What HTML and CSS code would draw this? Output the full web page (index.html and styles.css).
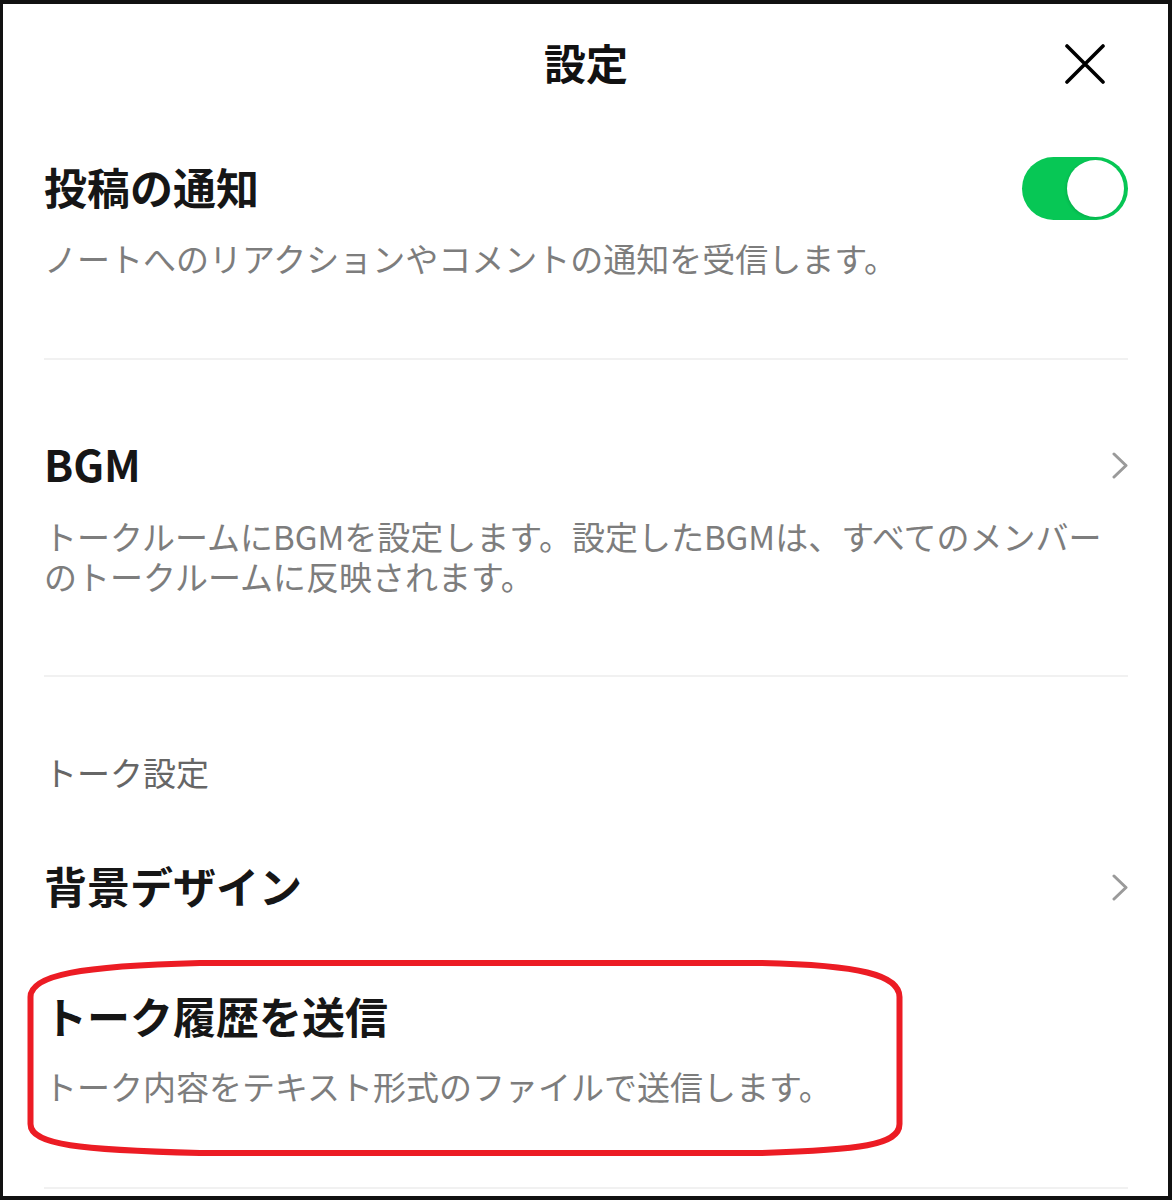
FILE: index.html
```html
<!DOCTYPE html>
<html lang="ja">
<head>
<meta charset="utf-8">
<title>設定</title>
<link rel="stylesheet" href="styles.css">
</head>
<body>
<div class="screen">
  <header class="topbar">
    <span class="spacer"></span>
    <h1 class="title">設定</h1>
    <button class="close" aria-label="閉じる">
      <svg width="40" height="40" viewBox="0 0 40 40"><path d="M2 2 L38 38 M38 2 L2 38" fill="none" stroke="#000" stroke-width="3.6" stroke-linecap="round"/></svg>
    </button>
  </header>

  <section class="item item-notify">
    <div class="item-row">
      <h2 class="item-title">投稿の通知</h2>
      <span class="toggle"><span class="knob"></span></span>
    </div>
    <p class="item-desc">ノートへのリアクションやコメントの通知を受信します。</p>
  </section>
  <hr class="divider">

  <section class="item item-bgm">
    <div class="item-row">
      <h2 class="item-title">BGM</h2>
      <svg class="chevron" width="16" height="27" viewBox="0 0 16 27"><path d="M2 2 L14 13.5 L2 25" fill="none" stroke="#9a9a9a" stroke-width="3" stroke-linecap="round" stroke-linejoin="round"/></svg>
    </div>
    <p class="item-desc">トークルームにBGMを設定します。設定したBGMは、すべてのメンバーのトークルームに反映されます。</p>
  </section>
  <hr class="divider">

  <p class="group-label">トーク設定</p>

  <div class="item-row row-background">
    <h2 class="item-title">背景デザイン</h2>
    <svg class="chevron" width="16" height="27" viewBox="0 0 16 27"><path d="M2 2 L14 13.5 L2 25" fill="none" stroke="#9a9a9a" stroke-width="3" stroke-linecap="round" stroke-linejoin="round"/></svg>
  </div>

  <section class="item item-export">
    <div class="item-row">
      <h2 class="item-title">トーク履歴を送信</h2>
    </div>
    <p class="item-desc">トーク内容をテキスト形式のファイルで送信します。</p>
  </section>
  <hr class="divider">

  <svg class="annotation" width="1172" height="1200" viewBox="0 0 1172 1200">
    <path d="M30.5 997 C30.5 975 80 966 200 963 L760 963 C860 965 899.5 975 899.5 997 L899.5 1124 C899.5 1145 860 1150 760 1153 L200 1153 C80 1150 30.5 1145 30.5 1124 Z" fill="none" stroke="#ec1c24" stroke-width="6"/>
  </svg>
</div>
</body>
</html>
```

FILE: styles.css
```css
* {
  box-sizing: border-box;
}

html, body {
  margin: 0;
  padding: 0;
  background: #fff;
}

body {
  font-family: "Noto Sans CJK JP", "Noto Sans", sans-serif;
  color: #000;
}

.screen {
  position: relative;
  width: 1172px;
  height: 1200px;
  overflow: hidden;
  background: #fff;
  border-style: solid;
  border-color: #111;
  border-width: 4px 4px 4px 3px;
  padding: 0 40px 0 41px;
}

.topbar {
  height: 120px;
  padding-bottom: 5px;
  display: grid;
  grid-template-columns: 1fr auto 1fr;
  align-items: center;
}

.title {
  margin: 0;
  font-size: 42px;
  font-weight: 700;
  line-height: 50px;
  color: #111;
}

.close {
  justify-self: end;
  margin: 4px 23px 0 0;
  width: 40px;
  height: 40px;
  padding: 0;
  border: 0;
  background: none;
  display: flex;
}

.item-row {
  min-height: 64px;
  display: flex;
  align-items: center;
  justify-content: space-between;
}

.item-title {
  margin: 0 0 5px;
  font-size: 43px;
  font-weight: 700;
  line-height: 58px;
  color: #161616;
}

.item-desc {
  margin: 0;
  font-size: 33px;
  line-height: 40px;
  color: #7d7d7d;
}

.item-notify {
  padding: 32px 0 80px;
}

.item-notify .item-desc {
  margin-top: 18px;
}

.item-bgm {
  padding: 73px 0 79px;
}

.item-bgm .item-desc {
  margin-top: 19px;
}

.group-label {
  margin: 75px 0 0;
  font-size: 33px;
  line-height: 40px;
  color: #666;
}

.row-background {
  margin-top: 63px;
}

.item-export {
  padding: 66px 0 81px;
}

.item-export .item-desc {
  margin-top: 17px;
}

.divider {
  margin: 0;
  height: 2px;
  border: 0;
  background: #f1f1f1;
}

.chevron {
  flex: none;
}

.toggle {
  flex: none;
  width: 106px;
  height: 63px;
  margin-top: 1px;
  border-radius: 32px;
  background: #07c755;
  display: flex;
  align-items: center;
  justify-content: flex-end;
  padding-right: 4px;
}

.knob {
  width: 57px;
  height: 57px;
  border-radius: 50%;
  background: #fff;
  box-shadow: -1px 1px 3px rgba(0, 0, 0, 0.12);
}

.annotation {
  position: absolute;
  top: -4px;
  left: -3px;
  pointer-events: none;
}
```
